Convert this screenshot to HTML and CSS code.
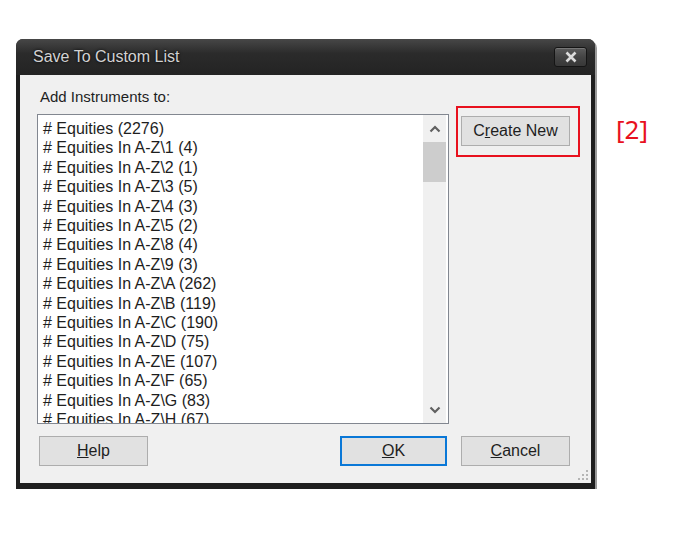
FILE: index.html
```html
<!DOCTYPE html>
<html lang="en">
  <head>
    <meta charset="UTF-8" />
    <title>Save To Custom List</title>
    <link rel="stylesheet" href="styles.css">
  </head>
  <body>
    <div class="screen">
      <div class="dialog">
        <div class="titlebar">
          <span class="title">Save To Custom List</span>
          <button class="close-btn" title="Close">
            <svg width="14" height="12" viewBox="0 0 14 12">
              <path d="M2.5 1.5 L11.5 10.5 M11.5 1.5 L2.5 10.5" stroke="#dcdcdc" stroke-width="2.6" />
            </svg>
          </button>
        </div>

        <div class="client">
          <div class="caption">Add Instruments to:</div>

          <div class="main">
            <div class="listbox">
              <ul class="items">
                <li># Equities (2276)</li>
                <li># Equities In A-Z\1 (4)</li>
                <li># Equities In A-Z\2 (1)</li>
                <li># Equities In A-Z\3 (5)</li>
                <li># Equities In A-Z\4 (3)</li>
                <li># Equities In A-Z\5 (2)</li>
                <li># Equities In A-Z\8 (4)</li>
                <li># Equities In A-Z\9 (3)</li>
                <li># Equities In A-Z\A (262)</li>
                <li># Equities In A-Z\B (119)</li>
                <li># Equities In A-Z\C (190)</li>
                <li># Equities In A-Z\D (75)</li>
                <li># Equities In A-Z\E (107)</li>
                <li># Equities In A-Z\F (65)</li>
                <li># Equities In A-Z\G (83)</li>
                <li># Equities In A-Z\H (67)</li>
                <li># Equities In A-Z\I (48)</li>
              </ul>
              <div class="scrollbar">
                <div class="arrow">
                  <svg width="12" height="8" viewBox="0 0 12 8">
                    <polyline points="1.5,6.5 6,2 10.5,6.5" fill="none" stroke="#606060" stroke-width="2.2" />
                  </svg>
                </div>
                <div class="thumb"></div>
                <div class="track"></div>
                <div class="arrow">
                  <svg width="12" height="8" viewBox="0 0 12 8">
                    <polyline points="1.5,1.5 6,6 10.5,1.5" fill="none" stroke="#606060" stroke-width="2.2" />
                  </svg>
                </div>
              </div>
            </div>

            <div class="side">
              <button class="btn">C<span class="key">r</span>eate New</button>
              <div class="highlight"></div>
            </div>
          </div>

          <div class="footer">
            <button class="btn help"><span class="key">H</span>elp</button>
            <button class="btn default"><span class="key">O</span>K</button>
            <button class="btn"><span class="key">C</span>ancel</button>
          </div>

          <div class="grip">
            <svg width="12" height="12" viewBox="0 0 12 12" fill="#b5b5b5">
              <rect x="9" y="1" width="2" height="2" />
              <rect x="5" y="5" width="2" height="2" />
              <rect x="9" y="5" width="2" height="2" />
              <rect x="1" y="9" width="2" height="2" />
              <rect x="5" y="9" width="2" height="2" />
              <rect x="9" y="9" width="2" height="2" />
            </svg>
          </div>
        </div>
      </div>

      <div class="note">[2]</div>
    </div>
  </body>
</html>
```

FILE: styles.css
```css
body {
  margin: 0;
  background: #fff;
  font-family: 'Liberation Sans', Arial, sans-serif;
}
.screen {
  display: flex;
  align-items: flex-start;
  padding: 39px 0 0 16px;
}
.dialog {
  width: 579px;
  background: #1e1e1e;
  border-radius: 7px 7px 0 0;
  padding: 0 4px 6px 4px;
  box-sizing: border-box;
  box-shadow: 2px 2px 0 #9a9a9a;
}
.titlebar {
  height: 36px;
  display: flex;
  align-items: flex-start;
  padding: 0 4px 0 17px;
  background: linear-gradient(#474747, #2b2b2b 40%, #232323);
  margin: 0 -4px;
  border-radius: 7px 7px 0 0;
}
.title {
  margin-top: 9px;
  font-size: 16px;
  color: #d2d2d2;
  text-shadow: 0 0 3px #000;
}
.close-btn {
  margin: 8px 4px 0 auto;
  width: 33px;
  height: 20px;
  padding: 0;
  border: 1px solid #151515;
  border-radius: 3px;
  background: linear-gradient(#5c5c5c, #444 50%, #383838);
  box-shadow: inset 0 1px 0 #777;
  display: flex;
  align-items: center;
  justify-content: center;
}
.client {
  position: relative;
  height: 408px;
  background: #f0f0f0;
  padding: 13px 21px 0 17px;
  box-sizing: border-box;
}
.caption {
  font-size: 15px;
  color: #1e1e1e;
  height: 20px;
  margin: 0 0 6px 3px;
}
.main {
  display: flex;
  gap: 12px;
}
.listbox {
  width: 412px;
  height: 310px;
  border: 1px solid #828790;
  background: #fff;
  box-sizing: border-box;
  display: flex;
  overflow: hidden;
}
.items {
  flex: 1;
  margin: 0;
  padding: 4px 0 0 5px;
  list-style: none;
  font-size: 16px;
  line-height: 19.4px;
  color: #1e1e1e;
  white-space: nowrap;
  overflow: hidden;
}
.scrollbar {
  width: 23px;
  margin-right: 2px;
  background: #f0f0f0;
  display: flex;
  flex-direction: column;
}
.arrow {
  height: 27px;
  display: flex;
  align-items: center;
  justify-content: center;
}
.thumb {
  height: 40px;
  background: #cdcdcd;
}
.track {
  flex: 1;
}
.side {
  position: relative;
  padding-top: 2px;
}
.btn {
  width: 109px;
  height: 30px;
  padding: 0;
  font-family: 'Liberation Sans', Arial, sans-serif;
  font-size: 16px;
  color: #1e1e1e;
  background: #e1e1e1;
  border: 1px solid #adadad;
}
.key {
  text-decoration: underline;
}
.highlight {
  position: absolute;
  left: -5px;
  top: -8px;
  width: 124px;
  height: 51px;
  border: 2px solid #e8111e;
  box-sizing: border-box;
}
.footer {
  display: flex;
  margin-top: 12px;
  gap: 14px;
}
.help {
  margin-left: 2px;
  margin-right: auto;
}
.default {
  width: 107px;
  border: 2px solid #0a78d7;
}
.grip {
  position: absolute;
  right: 2px;
  bottom: 2px;
  line-height: 0;
}
.note {
  margin: 72px 0 0 21px;
  font-family: 'Noto Sans', sans-serif;
  font-size: 26px;
  color: #e8111e;
}
```
